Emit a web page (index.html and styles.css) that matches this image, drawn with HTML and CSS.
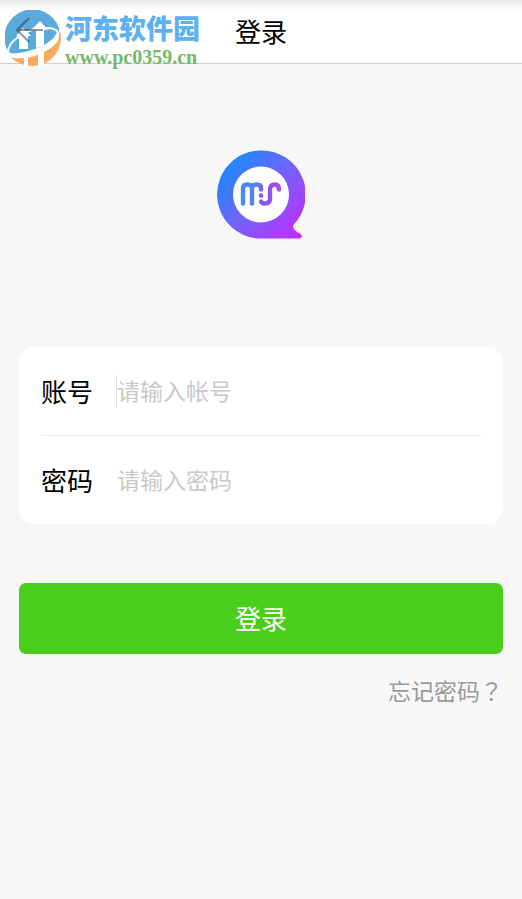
FILE: index.html
```html
<!DOCTYPE html>
<html lang="zh-CN">
<head>
<meta charset="utf-8">
<meta name="viewport" content="width=device-width, initial-scale=1">
<title>登录</title>
<link rel="stylesheet" href="styles.css">
</head>
<body>
<header class="topbar">
  <h1 class="title">登录</h1>
  <div class="brand">
    <svg class="brand-mark" viewBox="0 0 57 57" aria-hidden="true">
      <path fill="#5aaadb" d="M1 37A28 28 0 0 1 54 18C56 30 36 42 12 44 6 45 2 42 1 37Z"/>
      <path fill="#f6ac5e" d="M6 47C24 48 50 38 55 21A28 28 0 0 1 28 56C18 56 10 52 6 47Z"/>
      <path fill="#fff" d="M11 26 18 18l8 8h-3v13h-9V26Zm15-6 9-9 8 9h-4v16l-8 2V20Z"/>
      <path fill="none" stroke="#fff" stroke-width="2" d="M3 43C2 32 22 17 42 18q8 0 11 4"/>
      <path fill="#fff" d="M2 40c1 3 5 4 11 3 18-2 39-12 39-23 6 8-1 16-13 22C26 49 10 50 4 46c-2-2-3-4-2-6Z"/>
      <path fill="#fff" d="M19 46h4v10h-4zM33 43l6-2v14l-6 1Z"/>
    </svg>
    <div class="brand-text">
      <span class="brand-name">河东软件园</span>
      <span class="brand-url">www.pc0359.cn</span>
    </div>
  </div>
  <button class="back" type="button" aria-label="返回">
    <svg viewBox="0 0 30 28" aria-hidden="true"><path d="M29 14H3M15 2 3 14l12 12"/></svg>
  </button>
</header>
<main class="content">
  <svg class="logo" viewBox="0 0 88 88" role="img" aria-label="MS">
    <defs>
      <linearGradient id="ring" gradientUnits="userSpaceOnUse" x1="10" y1="14" x2="82" y2="84">
        <stop offset="0" stop-color="#1e88ff"/><stop offset=".5" stop-color="#7760fc"/><stop offset="1" stop-color="#c12dfa"/>
      </linearGradient>
      <linearGradient id="mark" gradientUnits="userSpaceOnUse" x1="24" y1="0" x2="64" y2="0">
        <stop offset="0" stop-color="#468cf7"/><stop offset=".42" stop-color="#5a7cf5"/><stop offset=".55" stop-color="#8a52ee"/><stop offset="1" stop-color="#a94cf2"/>
      </linearGradient>
    </defs>
    <path fill="url(#ring)" d="M44 0a44 44 0 0 1 32 75c0 4 4 7 7 8 3 2 2 5-1 5H44a44 44 0 0 1 0-88Z"/>
    <circle cx="44" cy="44" r="28" fill="#fff"/>
    <g fill="none" stroke="url(#mark)" stroke-width="4.400" stroke-linecap="round" stroke-linejoin="round">
      <path d="M26 53V38q0-4 4-4h1q4 0 4 4v15V38q0-4 4-4h1q4 0 4 4v1"/>
      <path d="M44 51q1 2 4 2 5 0 5-5v-9q0-5 5-5 4 0 4 5"/>
    </g>
    <circle cx="44" cy="45" r="2.300" fill="#8953ee"/>
  </svg>
  <form class="login">
    <div class="card">
      <div class="field">
        <label for="account">账号</label>
        <span class="caret"></span>
        <input id="account" type="text" placeholder="请输入帐号">
      </div>
      <div class="field">
        <label for="password">密码</label>
        <span class="caret idle"></span>
        <input id="password" type="password" placeholder="请输入密码">
      </div>
    </div>
    <button class="submit" type="submit">登录</button>
    <a class="forgot" href="#">忘记密码<span lang="zh-TW" class="mark">？</span></a>
  </form>
</main>
</body>
</html>
```
FILE: styles.css
```css
* { box-sizing: border-box; }

body {
  margin: 0;
  min-height: 100vh;
  background: #f7f7f7;
  color: #000;
  font-family: "Noto Sans CJK SC", sans-serif;
}

.topbar {
  position: relative;
  display: flex;
  align-items: center;
  justify-content: center;
  height: 64px;
  padding-bottom: 2px;
  background: linear-gradient(#e9e9e9, #fafafa 8px, #fff 14px);
  border-bottom: 1px solid #d0d0d3;
}

.title {
  margin: 0;
  font-size: 26px;
  line-height: 40px;
  font-weight: 400;
}

.brand {
  position: absolute;
  top: 10px;
  left: 5px;
  display: flex;
  gap: 3px;
}

.brand-mark { width: 57px; height: 57px; }

.brand-text { display: flex; flex-direction: column; }

.brand-name {
  color: #5cb1f2;
  font-size: 27px;
  line-height: 36px;
  font-weight: 900;
}

.brand-url {
  color: #73b966;
  font: bold 20px/22px "Liberation Serif", serif;
}

.back {
  position: absolute;
  top: 16px;
  left: 14px;
  padding: 0;
  border: 0;
  background: none;
}

.back svg {
  display: block;
  width: 30px;
  height: 28px;
  fill: none;
  stroke: #303438;
  stroke-opacity: .5;
  stroke-width: 2;
}

.content { padding: 86px 19px 0; }

.logo {
  display: block;
  width: 88px;
  height: 89px;
  margin: 0 auto 108px;
}

.login { display: flex; flex-direction: column; }

.card {
  padding: 0 22px;
  border-radius: 15px;
  background: #fff;
}

.field {
  display: flex;
  align-items: center;
  height: 88px;
}

.field:first-child {
  height: 89px;
  border-bottom: 1px solid #ececec;
}

.field label {
  flex: none;
  width: 75px;
  font-size: 26px;
  line-height: 40px;
}

.caret {
  flex: none;
  width: 1px;
  height: 32px;
  background: #e0e0e0;
}

.idle { background: none; }

.field input {
  flex: 1;
  min-width: 0;
  height: 40px;
  padding: 0 0 2px;
  border: 0;
  outline: 0;
  background: none;
  font: 23px "Noto Sans CJK SC", sans-serif;
}

.field input::placeholder { color: #c9c9c9; opacity: 1; }

.submit {
  height: 71px;
  margin-top: 59px;
  padding: 0 0 2px;
  border: 0;
  border-radius: 7px;
  background: #49cf1b;
  color: #fff;
  font: 26px/40px "Noto Sans CJK SC", sans-serif;
}

.forgot {
  align-self: flex-end;
  margin-top: 16px;
  color: #999;
  font-size: 23px;
  line-height: 40px;
  text-decoration: none;
}

.mark { font-family: "Noto Sans CJK TC", sans-serif; }
```
